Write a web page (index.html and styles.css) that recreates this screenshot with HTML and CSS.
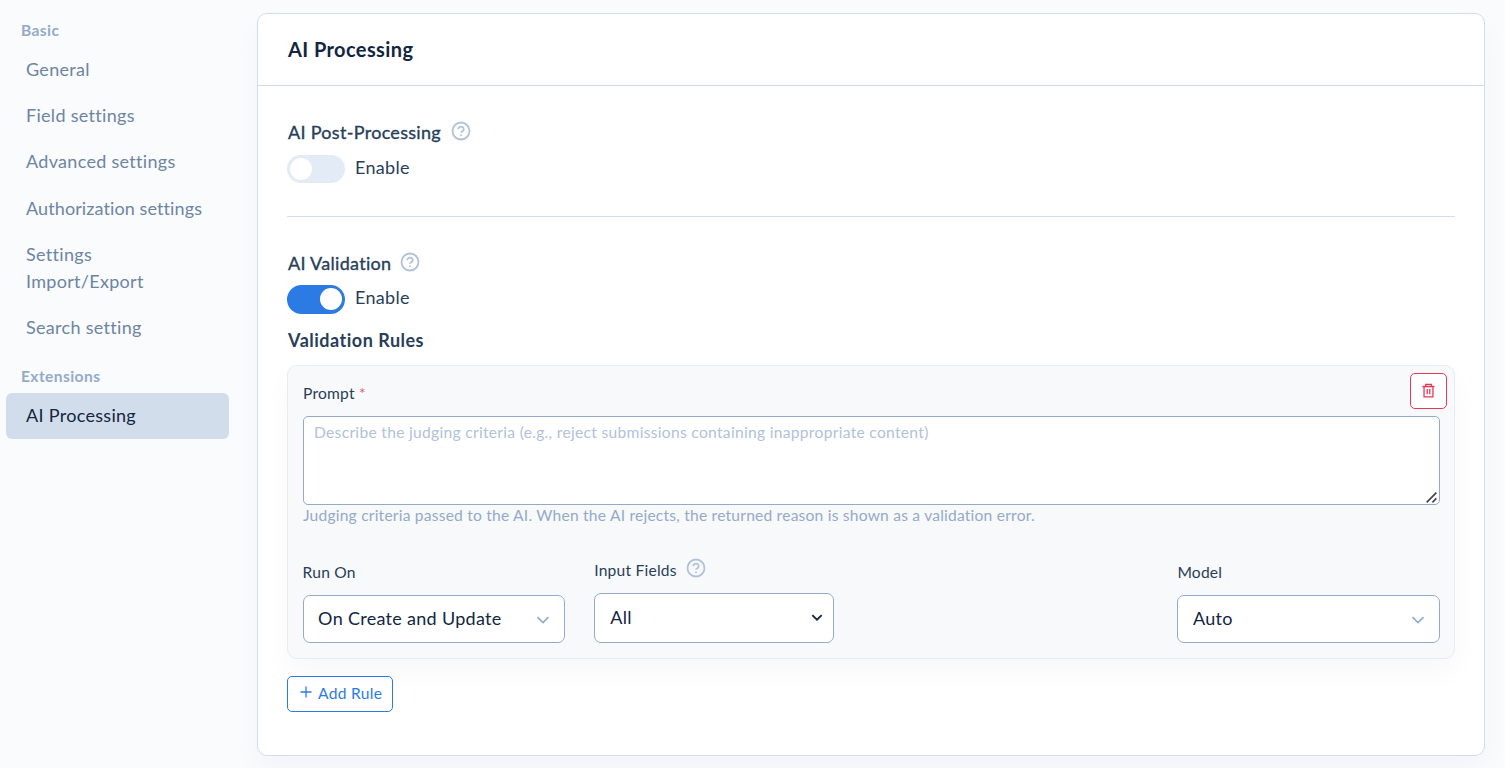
FILE: index.html
```
<!DOCTYPE html>
<html lang="en">
<head>
    <meta charset="UTF-8">
    <meta name="viewport" content="width=device-width, initial-scale=1.0">
    <title>AI Processing</title>
    <link rel="stylesheet" href="styles.css">
</head>

<body>
    <svg class="defs">
        <symbol id="help" viewBox="0 0 20 20">
            <circle cx="10" cy="10" r="8.5" />
            <path d="M7.3 8.2a2.700 2.500 0 1 1 4.200 2c-.9.5-1.5.8-1.500 1.600" />
            <path d="M10 13.500v1.600" />
        </symbol>
        <symbol id="chevron" viewBox="0 0 14 8">
            <path d="M1.5 1.2 7 6.6l5.5-5.4" />
        </symbol>
    </svg>

    <nav class="sidebar">
        <h6 class="nav-title">Basic</h6>
        <a class="nav-link">General</a>
        <a class="nav-link">Field settings</a>
        <a class="nav-link">Advanced settings</a>
        <a class="nav-link long">Authorization settings</a>
        <a class="nav-link">Settings<br>Import/Export</a>
        <a class="nav-link">Search setting</a>
        <h6 class="nav-title second">Extensions</h6>
        <a class="nav-link active">AI Processing</a>
    </nav>

    <main class="card">
        <div class="card-header">
            <h4>AI Processing</h4>
        </div>
        <div class="card-body">
            <section class="setting">
                <div class="setting-title"><span class="name">AI Post-Processing</span><svg class="help"><use href="#help" /></svg></div>
                <div class="switch-row">
                    <span class="switch"></span>
                    <span class="switch-label">Enable</span>
                </div>
            </section>
            <hr>
            <section class="setting">
                <div class="setting-title validation"><span class="name">AI Validation</span><svg class="help"><use href="#help" /></svg></div>
                <div class="switch-row">
                    <span class="switch on"></span>
                    <span class="switch-label">Enable</span>
                </div>
            </section>
            <h5>Validation Rules</h5>

            <div class="rule">
                <button class="btn-delete">
                    <svg viewBox="0 0 14 16">
                        <path d="M.5 3.7h13M4 3.5V1.3h6v2.2M2.2 4v10.8h9.6V4M5.6 6.5v5.6M8.4 6.5v5.6" />
                    </svg>
                </button>
                <label class="prompt-label">Prompt <span class="required">*</span></label>
                <div class="textarea-box">
                    <textarea placeholder="Describe the judging criteria (e.g., reject submissions containing inappropriate content)"></textarea>
                    <svg class="grip" viewBox="0 0 12 12">
                        <path d="M.7 11.3 11.3.7M7 11.3l4.3-4.3" />
                    </svg>
                </div>
                <p class="hint">Judging criteria passed to the AI. When the AI rejects, the returned reason is shown as a validation error.</p>
                <div class="fields">
                    <div class="field">
                        <label>Run On</label>
                        <div class="select"><span>On Create and Update</span><svg class="chevron"><use href="#chevron" /></svg></div>
                    </div>
                    <div class="field">
                        <div class="label-row"><label>Input Fields</label><svg class="help"><use href="#help" /></svg></div>
                        <div class="select native"><span>All</span><svg class="chevron"><use href="#chevron" /></svg></div>
                    </div>
                    <div class="field model">
                        <label>Model</label>
                        <div class="select"><span>Auto</span><svg class="chevron"><use href="#chevron" /></svg></div>
                    </div>
                </div>
            </div>

            <button class="btn-add">
                <svg viewBox="0 0 12 12"><path d="M6 .5v11M.5 6h11" /></svg>
                <span>Add Rule</span>
            </button>
        </div>
    </main>
</body>

</html>
```
FILE: styles.css
```
* {
    box-sizing: border-box;
}

body {
    margin: 0;
    height: 768px;
    overflow: hidden;
    display: flex;
    align-items: flex-start;
    background-color: #f9fbfd;
    color: #283e59;
    font-family: Lato, "Liberation Sans", sans-serif;
    font-size: 18px;
    line-height: 27px;
    letter-spacing: 0.3px;
}

h4, h5, h6, p {
    margin: 0;
}

svg {
    fill: none;
    stroke: currentColor;
    flex: none;
}

button, textarea {
    font: inherit;
    letter-spacing: inherit;
}

.defs {
    display: none;
}

/* sidebar */
.sidebar {
    width: 257px;
    padding: 21px 28px 0 6px;
}

.nav-title {
    padding-left: 15px;
    margin-bottom: 6.2px;
    font-size: 15.6px;
    line-height: 19px;
    font-weight: 700;
    letter-spacing: 0.4px;
    color: #95aac9;
}

.nav-title.second {
    margin: 15.8px 0 7px;
}

.nav-link {
    display: block;
    padding: 9.6px 20px 9.7px;
    color: #6e84a3;
}

.nav-link.long {
    letter-spacing: 0.1px;
}

.nav-link.active {
    padding-top: 9px;
    padding-bottom: 10px;
    background-color: #d2ddec;
    border-radius: 6px;
    color: #12263f;
}

/* main card */
.card {
    width: 1228px;
    height: 743px;
    margin-top: 13px;
    background-color: #fff;
    border: 1px solid #d2ddec;
    border-radius: 10px;
    box-shadow: 0 14px 29px rgba(18, 38, 63, 0.03);
}

.card-header {
    height: 72px;
    padding: 0 30px;
    display: flex;
    align-items: center;
    border-bottom: 1px solid #d2ddec;
}

h4 {
    font-size: 20px;
    font-weight: 700;
    letter-spacing: 0.4px;
    color: #12263f;
}

.card-body {
    padding: 32px 29px 0;
}

.setting-title {
    display: flex;
    align-items: flex-start;
    height: 37px;
    gap: 10px;
    line-height: 28px;
}

.setting-title.validation {
    height: 38px;
    padding-top: 1px;
    gap: 9px;
    margin-bottom: -1px;
}

.name {
    padding-left: 1px;
    -webkit-text-stroke: 0.35px currentColor;
}

.help {
    width: 20px;
    height: 20px;
    margin-top: 3px;
    color: #b1c2d9;
    stroke-width: 1.8;
}

.switch-row {
    display: flex;
    gap: 10px;
    line-height: 25px;
}

.switch {
    width: 58px;
    height: 28px;
    padding: 3px;
    border-radius: 15px;
    background-color: #e3ebf6;
}

.switch::before {
    content: "";
    display: block;
    width: 22px;
    height: 22px;
    border-radius: 50%;
    background-color: #fff;
}

.switch.on {
    height: 29px;
    background-color: #2c7be5;
}

.switch.on::before {
    margin-left: auto;
}

hr {
    height: 1px;
    margin: 33px 0 31px;
    border: 0;
    background-color: #d2ddec;
}

h5 {
    margin-top: 13px;
    padding-left: 1px;
    font-size: 18px;
    font-weight: 700;
    line-height: 27px;
    letter-spacing: 0.5px;
}

/* validation rule */
.rule {
    position: relative;
    height: 294px;
    margin: 11px 0 17px;
    padding: 15px 14px 0 15px;
    background-color: #f8f9fb;
    border: 1px solid #e8ecf1;
    border-radius: 10px;
    box-shadow: 0 14px 29px rgba(0, 0, 0, 0.03);
    font-size: 15.6px;
}

.prompt-label {
    display: block;
    height: 35px;
    line-height: 24px;
    letter-spacing: 0.2px;
}

.required {
    color: #e63757;
    opacity: 0.8;
}

.btn-delete {
    position: absolute;
    top: 7px;
    right: 7px;
    width: 37px;
    height: 36px;
    padding: 0 0 1px;
    display: flex;
    align-items: center;
    justify-content: center;
    background-color: #fff;
    border: 1px solid #e63757;
    border-radius: 5px;
    color: #e63757;
}

.btn-delete svg {
    width: 13px;
    height: 15px;
    stroke-width: 1.4;
}

.textarea-box {
    position: relative;
    height: 89px;
}

textarea {
    display: block;
    width: 100%;
    height: 89px;
    padding: 3px 10px;
    resize: none;
    background-color: #fff;
    border: 1px solid #95aac9;
    border-radius: 5px;
    line-height: 24px;
}

textarea::placeholder {
    color: #b1c2d9;
}

.grip {
    position: absolute;
    right: 3px;
    bottom: 2px;
    width: 11px;
    height: 11px;
    color: #444;
    stroke-width: 1.8;
}

.hint {
    line-height: 21px;
    letter-spacing: 0.21px;
    color: #95aac9;
}

.fields {
    display: grid;
    grid-template-columns: repeat(4, 1fr);
    column-gap: 29px;
    align-items: end;
    margin: 32px 0 0 -0.4px;
}

.field label {
    display: block;
    height: 35px;
    line-height: 24px;
    letter-spacing: 0.22px;
}

.field.model {
    grid-column: 4;
}

.label-row {
    display: flex;
    gap: 9px;
}

.label-row .help {
    margin-top: 0;
}

.label-row label {
    margin-top: 0;
}

.select {
    display: flex;
    align-items: center;
    justify-content: space-between;
    height: 48px;
    padding: 0 14px 1px 14.5px;
    background-color: #fff;
    border: 1px solid #95aac9;
    border-radius: 7px;
    font-size: 18px;
    color: #12263f;
}

.select.native {
    width: 240px;
    height: 50px;
    padding: 0 10px 1px 15px;
}

.chevron {
    width: 14px;
    height: 8px;
    margin-top: 2px;
    color: #95aac9;
    stroke-width: 1.7;
}

.native .chevron {
    width: 12px;
    height: 7px;
    margin-top: 0;
    color: #12263f;
    stroke-width: 2.1;
}

/* add button */
.btn-add {
    display: flex;
    align-items: center;
    width: 106px;
    height: 36px;
    padding: 0 12px 2px;
    gap: 6px;
    background-color: #fff;
    border: 1px solid #2c7be5;
    border-radius: 5px;
    font-size: 15.6px;
    color: #2c7be5;
    white-space: nowrap;
}

.btn-add svg {
    width: 12px;
    height: 12px;
    margin-top: -2px;
    stroke-width: 1.3;
}
```
